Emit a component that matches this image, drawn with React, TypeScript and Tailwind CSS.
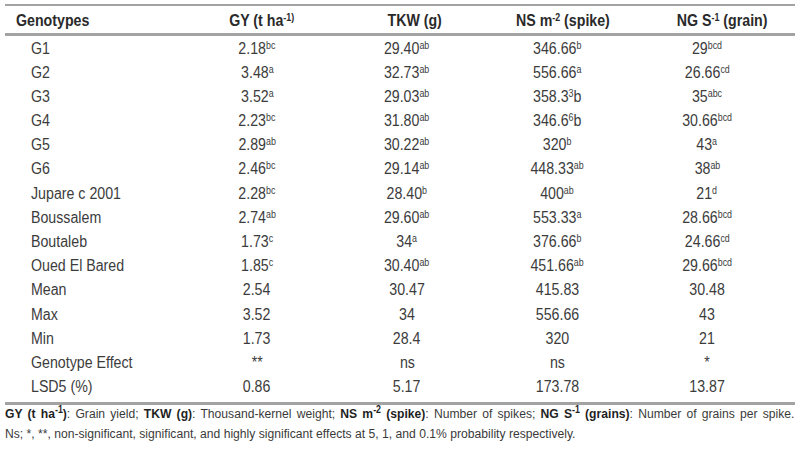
import React from "react";

type Cell = [string, string?, string?];
type Row = { label: string; cells: Cell[] };

const rows: Row[] = [
  { label: "G1", cells: [["2.18", "bc"], ["29.40", "ab"], ["346.66", "b"], ["29", "bcd"]] },
  { label: "G2", cells: [["3.48", "a"], ["32.73", "ab"], ["556.66", "a"], ["26.66", "cd"]] },
  { label: "G3", cells: [["3.52", "a"], ["29.03", "ab"], ["358.3", "3", "b"], ["35", "abc"]] },
  { label: "G4", cells: [["2.23", "bc"], ["31.80", "ab"], ["346.6", "6", "b"], ["30.66", "bcd"]] },
  { label: "G5", cells: [["2.89", "ab"], ["30.22", "ab"], ["320", "b"], ["43", "a"]] },
  { label: "G6", cells: [["2.46", "bc"], ["29.14", "ab"], ["448.33", "ab"], ["38", "ab"]] },
  { label: "Jupare c 2001", cells: [["2.28", "bc"], ["28.40", "b"], ["400", "ab"], ["21", "d"]] },
  { label: "Boussalem", cells: [["2.74", "ab"], ["29.60", "ab"], ["553.33", "a"], ["28.66", "bcd"]] },
  { label: "Boutaleb", cells: [["1.73", "c"], ["34", "a"], ["376.66", "b"], ["24.66", "cd"]] },
  { label: "Oued El Bared", cells: [["1.85", "c"], ["30.40", "ab"], ["451.66", "ab"], ["29.66", "bcd"]] },
  { label: "Mean", cells: [["2.54"], ["30.47"], ["415.83"], ["30.48"]] },
  { label: "Max", cells: [["3.52"], ["34"], ["556.66"], ["43"]] },
  { label: "Min", cells: [["1.73"], ["28.4"], ["320"], ["21"]] },
  { label: "Genotype Effect", cells: [["**"], ["ns"], ["ns"], ["*"]] },
  { label: "LSD5 (%)", cells: [["0.86"], ["5.17"], ["173.78"], ["13.87"]] },
];

const font = { fontFamily: '"Liberation Sans Narrow", "Arial Narrow", "Liberation Sans", sans-serif' };

function Sup({ children }: { children: React.ReactNode }) {
  return <span className="relative top-[-5px] text-[10px] leading-none">{children}</span>;
}

function N({ children, left }: { children: React.ReactNode; left?: boolean }) {
  return (
    <span className={`inline-block whitespace-nowrap scale-x-[0.887] ${left ? "origin-left" : "origin-center"}`}>
      {children}
    </span>
  );
}

export default function App() {
  return (
    <div className="w-[800px] h-[450px] bg-white px-[5px] pt-[4px] overflow-hidden" style={font}>
      <div className="h-[2px] bg-[#a3a3a3]" />
      <div className="flex h-[27px] pt-[6px] text-[16px] leading-[18px] font-bold text-[#2a2a2a] whitespace-nowrap">
        <div className="w-[177px] pl-[11px]">
          <N left>Genotypes</N>
        </div>
        <div className="w-[150px] flex justify-center pl-[10px]">
          <N>
            GY (t ha<Sup>-1)</Sup>
          </N>
        </div>
        <div className="w-[150px] flex justify-center pl-[16px]">
          <N>TKW (g)</N>
        </div>
        <div className="w-[150px] flex justify-center pl-[12px]">
          <N>
            NS m<Sup>-2</Sup> (spike)
          </N>
        </div>
        <div className="w-[150px] flex justify-center pl-[30px]">
          <N>
            NG S<Sup>-1</Sup> (grain)
          </N>
        </div>
      </div>
      <div className="h-[2.5px] bg-[#a3a3a3]" />
      <div className="mt-[1px] text-[16px] text-[#3c3c3c]">
        {rows.map((r) => (
          <div key={r.label} className="flex whitespace-nowrap leading-[24.2px] h-[24.2px]">
            <div className="w-[177px] pl-[26px]">
              <N left>{r.label}</N>
            </div>
            {r.cells.map((c, j) => (
              <div key={j} className="w-[150px] flex justify-center">
                <N>
                  {c[0]}
                  {c[1] ? <Sup>{c[1]}</Sup> : null}
                  {c[2] ? c[2] : null}
                </N>
              </div>
            ))}
          </div>
        ))}
      </div>
      <div className="mt-[3px] h-[2.5px] bg-[#a3a3a3]" />
      <div className="-mt-[1px] text-[13.7px] leading-[20.5px] text-[#3a3a3a] whitespace-nowrap">
        <div className="w-[890px] scale-x-[0.887] origin-left text-justify [text-align-last:justify]">
          <b className="text-[#1f1f1f]">
            GY (t ha<Sup>-1</Sup>)
          </b>
          : Grain yield; <b className="text-[#1f1f1f]">TKW (g)</b>: Thousand-kernel weight;{" "}
          <b className="text-[#1f1f1f]">
            NS m<Sup>-2</Sup> (spike)
          </b>
          : Number of spikes;{" "}
          <b className="text-[#1f1f1f]">
            NG S<Sup>-1</Sup> (grains)
          </b>
          : Number of grains per spike.
        </div>
        <div className="w-max scale-x-[0.887] origin-left">
          Ns; *, **, non-significant, significant, and highly significant effects at 5, 1, and 0.1% probability respectively.
        </div>
      </div>
    </div>
  );
}
